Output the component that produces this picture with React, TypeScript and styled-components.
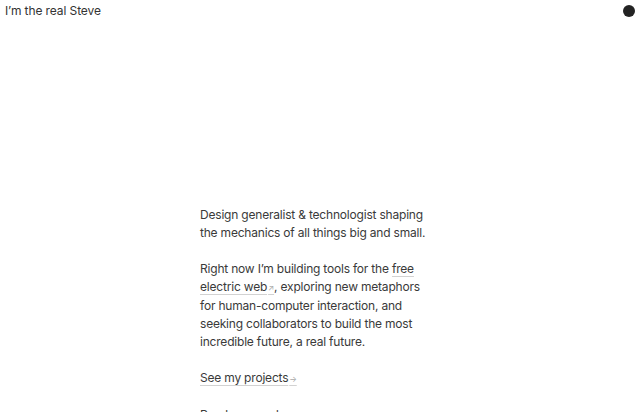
import React from "react";
import styled, { createGlobalStyle } from "styled-components";

const Global = createGlobalStyle`
  html, body { margin: 0; padding: 0; background: #fff; }
  body { font-family: Inter, "Noto Sans", sans-serif; color: #3a3a3a; -webkit-font-smoothing: antialiased; }
`;

const Header = styled.header`
  display: flex;
  align-items: center;
  justify-content: space-between;
  height: 22px;
  padding: 0 5px 0 5px;
`;

const Name = styled.div`
  font-size: 12px;
  line-height: 22px;
  letter-spacing: -0.1px;
  color: #333;
`;

const Dot = styled.div`
  width: 12px;
  height: 12px;
  border-radius: 50%;
  background: #232323;
`;

const Main = styled.main`
  width: 240px;
  margin: 184px auto 0;
  font-size: 12px;
  line-height: 18px;
  letter-spacing: -0.2px;
`;

const P = styled.p`
  margin: 0 0 18px;
  max-width: 232px;
`;

const Link = styled.a`
  color: inherit;
  text-decoration: underline;
  text-decoration-color: #d2d2d2;
  text-underline-offset: 3px;
  text-decoration-thickness: 1px;
`;

const Arrow = styled.span`
  font-size: 8px;
  color: #a8a8a8;
  margin-left: 1px;
`;

export default function App() {
  return (
    <>
      <Global />
      <Header>
        <Name>I’m the real Steve</Name>
        <Dot />
      </Header>
      <Main>
        <P>Design generalist &amp; technologist shaping the mechanics of all things big and small.</P>
        <P>
          Right now I’m building tools for the <Link href="#">free electric web<Arrow>↗</Arrow></Link>, exploring new metaphors for human-computer interaction, and seeking collaborators to build the most incredible future, a real future.
        </P>
        <P><Link href="#">See my projects<Arrow>→</Arrow></Link></P>
        <P><Link href="#">Read my words<Arrow>→</Arrow></Link></P>
      </Main>
    </>
  );
}
